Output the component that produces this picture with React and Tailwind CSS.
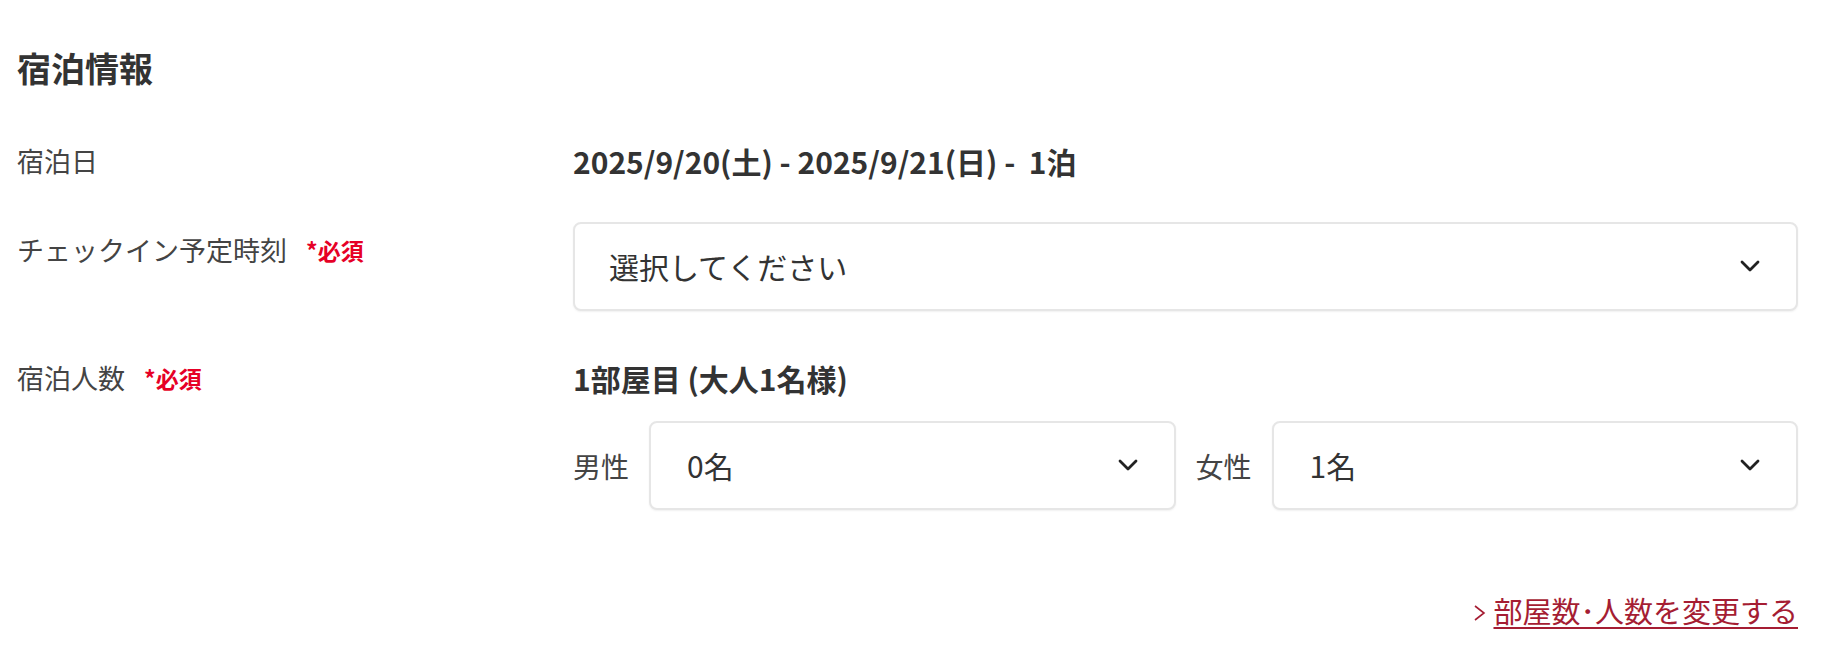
import React from "react";

function Chevron({ className = "" }) {
  return (
    <svg className={className} width="20" height="13" viewBox="0 0 20 13" fill="none">
      <polyline points="2,2 10,10 18,2" stroke="#222" strokeWidth="2.8" strokeLinecap="round" strokeLinejoin="round" />
    </svg>
  );
}

function Select({ value, className = "" }) {
  return (
    <div
      className={`flex h-[89px] items-center justify-between rounded-[8px] border-2 border-[#e6e6e6] bg-white pl-[34px] pr-[36px] shadow-[0_1px_2px_rgba(0,0,0,0.06)] ${className}`}
    >
      <span className="text-[30px] text-[#333]">{value}</span>
      <Chevron />
    </div>
  );
}

function Required() {
  return <span className="ml-[19px] text-[23px] font-bold text-[#e60026]">*必須</span>;
}

export default function App() {
  return (
    <div
      className="min-h-[668px] w-full bg-white pl-[17px] pr-[27px] pt-[42px]"
      style={{ fontFamily: '"Noto Sans CJK JP", "Noto Sans", sans-serif' }}
    >
      <h2 className="text-[34px] font-bold leading-[52px] text-[#333]">宿泊情報</h2>

      <div className="mt-[47px] flex items-start">
        <div className="w-[556px] shrink-0 text-[27px] leading-[40px] text-[#444]">宿泊日</div>
        <div className="flex-1 text-[30px] font-bold leading-[40px] text-[#333]">
          2025/9/20(土) - 2025/9/21(日) -&nbsp; 1泊
        </div>
      </div>

      <div className="mt-[41px] flex items-start">
        <div className="mt-[8px] flex w-[556px] shrink-0 items-center text-[27px] leading-[40px] text-[#444]">
          チェックイン予定時刻
          <Required />
        </div>
        <div className="flex-1">
          <Select value="選択してください" />
        </div>
      </div>

      <div className="mt-[47px] flex items-start">
        <div className="flex w-[556px] shrink-0 items-center text-[27px] leading-[40px] text-[#444]">
          宿泊人数
          <Required />
        </div>
        <div className="flex-1">
          <div className="text-[30px] font-bold leading-[40px] text-[#333]">1部屋目 (大人1名様)</div>
          <div className="mt-[23px] flex items-center gap-[20px]">
            <span className="w-[56px] shrink-0 text-[28px] text-[#444]">男性</span>
            <Select value="0名" className="flex-1 pl-[36px] pr-[32px]" />
            <span className="w-[56px] shrink-0 text-[28px] text-[#444]">女性</span>
            <Select value="1名" className="flex-1 pl-[36px] pr-[32px]" />
          </div>
        </div>
      </div>

      <div className="mt-[80px] flex justify-end">
        <a href="#" className="flex items-center text-[29px] leading-[40px] text-[#a51d33]">
          <svg width="13" height="20" viewBox="0 0 13 20" fill="none" className="mr-[6px] mt-[6px]">
            <polyline points="1,3 10,10 1,17" stroke="#a51d33" strokeWidth="1.6" />
          </svg>
          <span className="underline decoration-[2px] underline-offset-[4px]">部屋数･人数を変更する</span>
        </a>
      </div>
    </div>
  );
}
